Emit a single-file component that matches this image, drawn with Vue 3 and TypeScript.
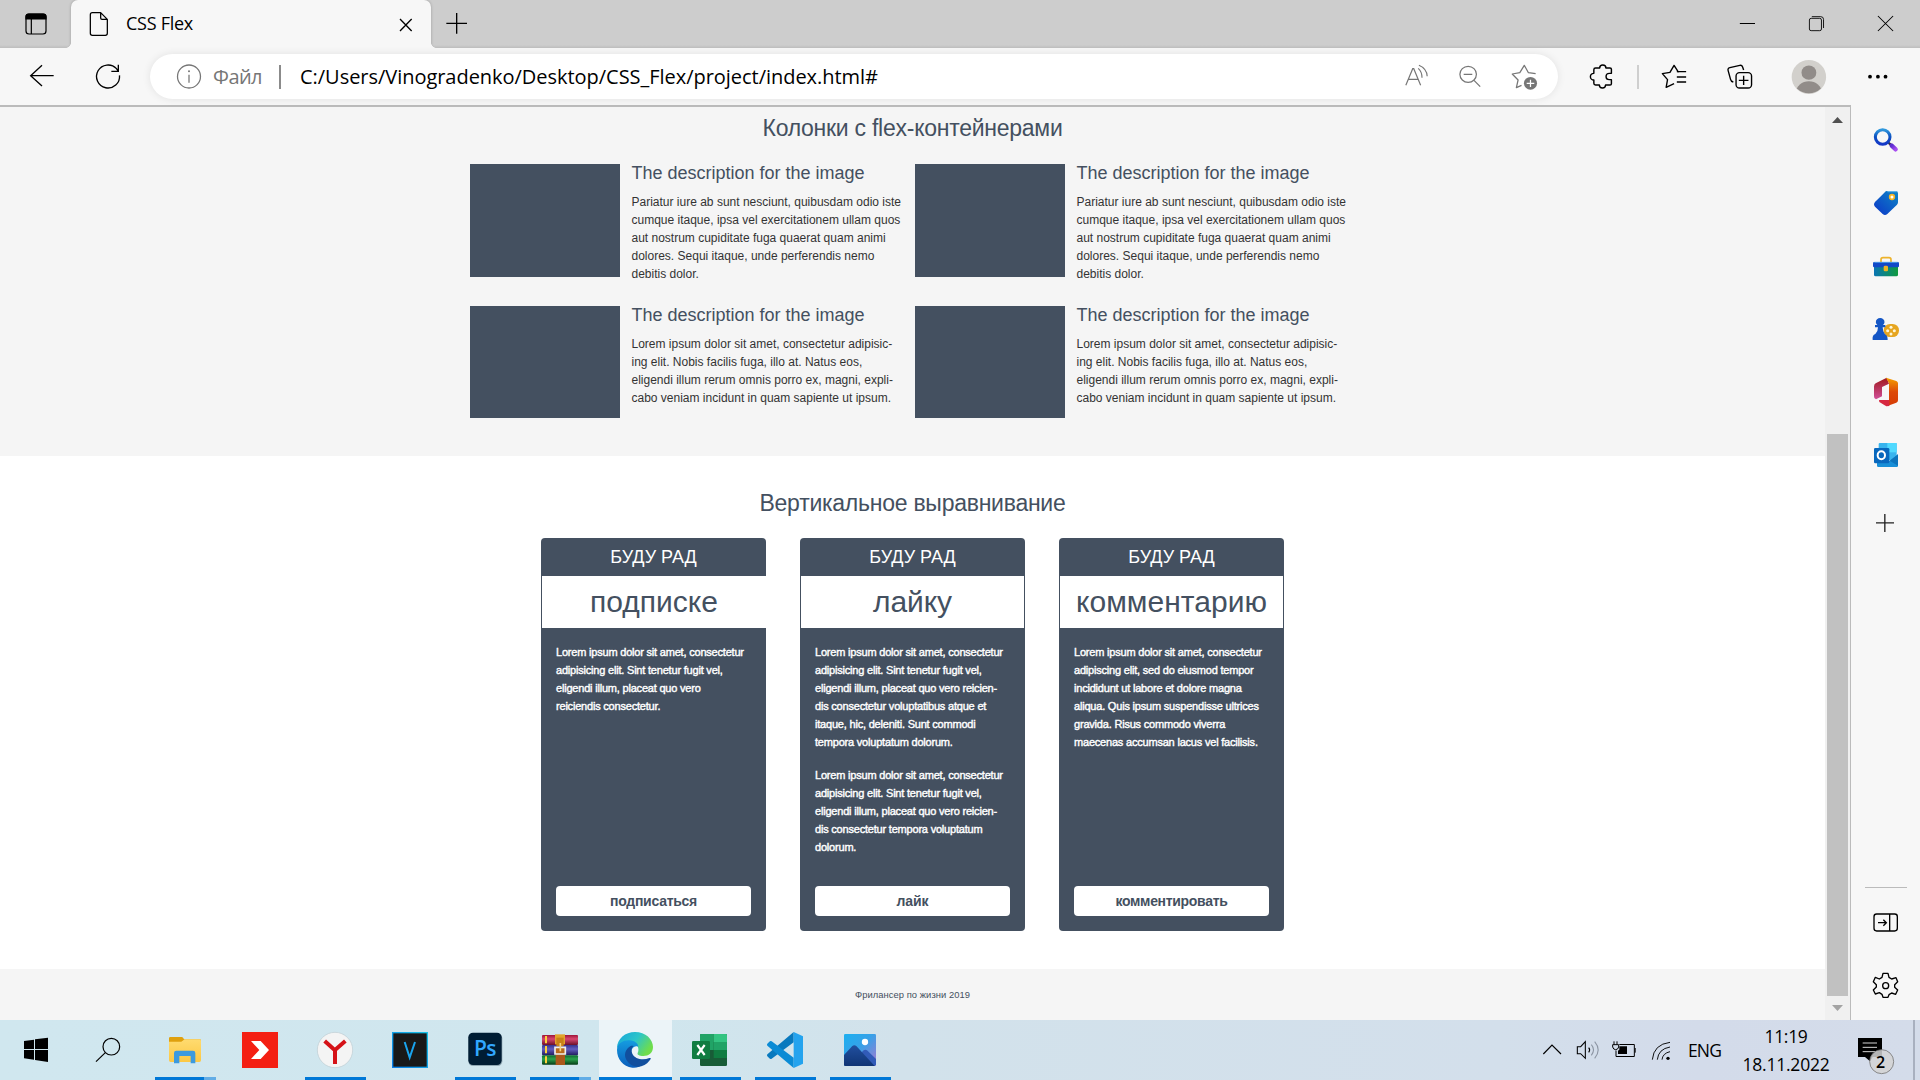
<script setup lang="ts">
interface Article { title: string; lines: string[] }
interface Card { title: string; width: number; kind: string; paragraphs: string[][]; action: string; actionWidth: number }

// Spreads the letters of a label so that it takes the given width.
const vFit = {
  mounted(el: HTMLElement, binding: { value: number }) {
    const count = (el.textContent ?? '').trim().length
    const natural = el.getBoundingClientRect().width
    el.style.letterSpacing = `${(binding.value - natural) / count}px`
  },
}

const pariatur: string[] = [
  'Pariatur iure ab sunt nesciunt, quibusdam odio iste',
  'cumque itaque, ipsa vel exercitationem ullam quos',
  'aut nostrum cupiditate fuga quaerat quam animi',
  'dolores. Sequi itaque, unde perferendis nemo',
  'debitis dolor.',
]
const lorem: string[] = [
  'Lorem ipsum dolor sit amet, consectetur adipisic-',
  'ing elit. Nobis facilis fuga, illo at. Natus eos,',
  'eligendi illum rerum omnis porro ex, magni, expli-',
  'cabo veniam incidunt in quam sapiente ut ipsum.',
]
const articles: Article[] = [pariatur, pariatur, lorem, lorem].map((lines) => ({
  title: 'The description for the image',
  lines,
}))

const cards: Card[] = [
  {
    title: 'подписке', width: 128, kind: 'open', action: 'подписаться', actionWidth: 87,
    paragraphs: [[
      'Lorem ipsum dolor sit amet, consectetur',
      'adipisicing elit. Sint tenetur fugit vel,',
      'eligendi illum, placeat quo vero',
      'reiciendis consectetur.',
    ]],
  },
  {
    title: 'лайку', width: 79, kind: 'closed', action: 'лайк', actionWidth: 32,
    paragraphs: [
      [
        'Lorem ipsum dolor sit amet, consectetur',
        'adipisicing elit. Sint tenetur fugit vel,',
        'eligendi illum, placeat quo vero reicien-',
        'dis consectetur voluptatibus atque et',
        'itaque, hic, deleniti. Sunt commodi',
        'tempora voluptatum dolorum.',
      ],
      [
        'Lorem ipsum dolor sit amet, consectetur',
        'adipisicing elit. Sint tenetur fugit vel,',
        'eligendi illum, placeat quo vero reicien-',
        'dis consectetur tempora voluptatum',
        'dolorum.',
      ],
    ],
  },
  {
    title: 'комментарию', width: 191, kind: 'closed', action: 'комментировать', actionWidth: 112,
    paragraphs: [[
      'Lorem ipsum dolor sit amet, consectetur',
      'adipiscing elit, sed do eiusmod tempor',
      'incididunt ut labore et dolore magna',
      'aliqua. Quis ipsum suspendisse ultrices',
      'gravida. Risus commodo viverra',
      'maecenas accumsan lacus vel facilisis.',
    ]],
  },
]

const SX = 2.904
const bar = (x: number, w: number, top = 144, h = 171): string => `${(x - 1380) * SX} ${top} ${w * SX} ${h}`
</script>

<template>
  <div class="screen">
    <header class="tabs">
      <svg width="71" height="48" viewBox="0 0 213 144" fill="none" stroke="#000" stroke-width="3.6">
        <rect x="78" y="42" width="60" height="60" rx="9" /><path d="M78 57V50q0-8 8-8h44q8 0 8 8v7z" fill="#000" /><path d="M94 57v45" />
      </svg>
      <div class="tab">
        <svg width="55" height="48" viewBox="213 0 165 144" fill="none" stroke="#000" stroke-width="3.8" stroke-linejoin="round">
          <path d="M277 38h25l20 20v42q0 6-6 6h-39q-6 0-6-6V44q0-6 6-6zM302 38v16q0 4 4 4h16" />
        </svg>
        <span class="tab-name"><span v-fit="67">CSS Flex</span></span>
        <svg class="tab-close" width="45" height="48" viewBox="1158 0 135 144" fill="none" stroke="#000" stroke-width="4">
          <path d="M1200 57l35 36M1235 57l-35 36" />
        </svg>
      </div>
      <svg width="50" height="48" viewBox="1293 0 150 144" fill="none" stroke="#000" stroke-width="4"><path d="M1339 70h62M1370 39v62" /></svg>
      <div class="window-buttons">
        <svg width="68" height="48" :viewBox="bar(1713, 68, 0, 144)" preserveAspectRatio="none" fill="none" stroke="#000" stroke-width="3"><path d="M1045 70.5h44" /></svg>
        <svg width="70" height="48" :viewBox="bar(1781, 70, 0, 144)" preserveAspectRatio="none" fill="none" stroke="#000" stroke-width="2.6"><rect x="1247" y="55" width="35" height="37" rx="5" /><path d="M1254 50h26q8 0 8 8v26" /></svg>
        <svg width="69" height="48" :viewBox="bar(1851, 69, 0, 144)" preserveAspectRatio="none" fill="none" stroke="#000" stroke-width="3"><path d="M1446 48l44 45M1490 48l-44 45" /></svg>
      </div>
    </header>

    <div class="toolbar">
      <svg width="72" height="57" viewBox="0 144 216 171" fill="none" stroke="#000" stroke-width="4"><path d="M161 227H92M126 196l-34 31 34 31" /></svg>
      <svg width="78" height="57" viewBox="216 144 234 171" fill="none" stroke="#000" stroke-width="4"><path d="M358.500 226a34.500 34.500 0 1 1-9-20l5 7M355 194v20h-21" /></svg>
      <div class="address">
        <svg width="63" height="45" viewBox="450 162 189 135" fill="none" stroke="#767676" stroke-width="3.8"><circle cx="567" cy="229.500" r="34.500" /><path d="M567 224v24" /><circle cx="567" cy="214" r="3" fill="#767676" stroke="none" /></svg>
        <span class="scheme"><span v-fit="49">Файл</span></span>
        <i class="address-rule"></i>
        <span class="url"><span v-fit="578">C:/Users/Vinogradenko/Desktop/CSS_Flex/project/index.html#</span></span>
        <div class="address-tools">
          <svg width="53" height="45" :viewBox="bar(1389, 53, 162, 135)" preserveAspectRatio="none" fill="none" stroke="#767676" stroke-width="3.4"><path d="M75 256l20-50h3l20 50M82 238h29M111 205q11 10 11 28M113 196q23 10 24 33" /></svg>
          <svg width="53" height="45" :viewBox="bar(1442, 53, 162, 135)" preserveAspectRatio="none" fill="none" stroke="#767676" stroke-width="3.6"><circle cx="256" cy="223" r="24" /><path d="M273 241l18 19M243 223h25" /></svg>
          <svg width="53" height="45" :viewBox="bar(1495, 53, 162, 135)" preserveAspectRatio="none" fill="none" stroke="#767676" stroke-width="3.6" stroke-linejoin="round"><path d="M452 221l-21-3-12-22-13 22-22 4 17 18-5 23 15-7" /><circle cx="437" cy="250" r="19" fill="#767676" stroke="none" /><path d="M426 250h22M437 239v22" stroke="#fff" /></svg>
        </div>
      </div>
      <svg width="79" height="57" :viewBox="bar(1558, 79)" preserveAspectRatio="none" fill="none" stroke="#000" stroke-width="4.200" stroke-linejoin="round"><path d="M626 204h12a9 9 0 0 1 18 0h12q4 0 4 4v12h-6a9 9 0 0 0 0 19h6v12q0 4-4 4h-13a9 9 0 0 1-18 0h-11q-5 0-5-5v-10a9 9 0 0 1 0-20v-11q0-5 5-5z" /></svg>
      <i class="toolbar-rule"></i>
      <svg width="68" height="57" :viewBox="bar(1639, 68)" preserveAspectRatio="none" fill="none" stroke="#000" stroke-width="4" stroke-linejoin="round"><path d="M867 217l-13-21-12 21-22 4 15 18-4 23 23-11M862 215h27M862 231h27M862 246h27" /></svg>
      <svg width="67" height="57" :viewBox="bar(1707, 67)" preserveAspectRatio="none" fill="none" stroke="#000" stroke-width="4" stroke-linejoin="round"><rect x="1034" y="218" width="45" height="46" rx="10" /><path d="M1056 227v28M1042 241h28M1026 246q-7-2-8-8l-7-26q-2-7 5-9l29-7q6-1 8 5l3 9" /></svg>
      <svg width="69" height="57" :viewBox="bar(1774, 69)" preserveAspectRatio="none"><defs><clipPath id="face"><circle cx="1245.500" cy="231" r="49" /></clipPath></defs><ellipse cx="1245.500" cy="231" rx="50" ry="51" fill="#d2d0cc" /><g clip-path="url(#face)" fill="#918c89"><circle cx="1245.500" cy="218" r="21.500" /><ellipse cx="1245.500" cy="276" rx="37" ry="32" /></g></svg>
      <svg width="77" height="57" :viewBox="bar(1843, 77)" preserveAspectRatio="none"><circle cx="1423" cy="230" r="5.500" /><circle cx="1446" cy="230" r="5.500" /><circle cx="1468" cy="230" r="5.500" /></svg>
    </div>

    <div class="body">
      <div class="view">
        <main class="page">
          <section class="columns">
            <h2><span v-fit="300">Колонки с flex-контейнерами</span></h2>
            <div class="grid">
              <article v-for="(a, i) in articles" :key="i">
                <div class="thumb"></div>
                <div class="text">
                  <h3>{{ a.title }}</h3>
                  <p><span v-for="line in a.lines" :key="line" class="line">{{ line }}</span></p>
                </div>
              </article>
            </div>
          </section>
          <section class="vertical">
            <h2><span v-fit="306">Вертикальное выравнивание</span></h2>
            <div class="cards">
              <div v-for="c in cards" :key="c.title" class="card">
                <div class="card-top">БУДУ РАД</div>
                <div class="card-title" :class="c.kind"><span v-fit="c.width">{{ c.title }}</span></div>
                <div class="card-text">
                  <p v-for="(p, n) in c.paragraphs" :key="n"><span v-for="line in p" :key="line" class="line">{{ line }}</span></p>
                </div>
                <a class="action"><span v-fit="c.actionWidth">{{ c.action }}</span></a>
              </div>
            </div>
          </section>
          <footer><span v-fit="115">Фрилансер по жизни 2019</span></footer>
        </main>
        <div class="scroll">
          <svg class="up" width="11" height="6" viewBox="0 0 11 6"><path d="M0 6l5.500-6L11 6z" fill="#505050" /></svg>
          <div class="thumb-bar"></div>
          <svg class="down" width="11" height="6" viewBox="0 0 11 6"><path d="M0 0h11L5.500 6z" fill="#a3a3a3" /></svg>
        </div>
      </div>

      <aside>
        <svg width="69" height="63" viewBox="123 27 207 189">
          <defs>
            <linearGradient id="lens" x1="0" y1="0" x2="0" y2="1"><stop offset="0" stop-color="#2f97dc" /><stop offset=".5" stop-color="#0b4fc0" /><stop offset="1" stop-color="#1437c8" /></linearGradient>
            <linearGradient id="tag" x1="0" y1="1" x2="1" y2="0"><stop offset="0" stop-color="#0c36c8" /><stop offset="1" stop-color="#0e86c6" /></linearGradient>
            <linearGradient id="chest" x1="0" y1="0" x2="1" y2="0"><stop offset="0" stop-color="#0a75b4" /><stop offset="1" stop-color="#109a3e" /></linearGradient>
            <linearGradient id="handle" x1="0" y1="0" x2="1" y2="1"><stop offset="0" stop-color="#5c2bd0" /><stop offset="1" stop-color="#a84ff0" /></linearGradient>
          </defs>
          <path d="M235 128l7 6" stroke="#334" stroke-width="7" /><path d="M245 137l12 11" stroke="url(#handle)" stroke-width="13" stroke-linecap="round" />
          <circle cx="218" cy="111" r="22" fill="none" stroke="url(#lens)" stroke-width="9" />
        </svg>
        <svg width="69" height="63" viewBox="123 216 207 189"><path d="M230 273h27q7 0 7 7v27q0 4-3 7l-29 28q-7 6-14 0l-23-22q-6-7 0-14l28-28q3-4 7-5z" fill="url(#tag)" /><path d="M232 275h28" stroke="#72bdeb" stroke-width="3" /><circle cx="246" cy="291" r="7" fill="#fff" stroke="#f5b526" stroke-width="5" /></svg>
        <svg width="69" height="63" viewBox="123 405 207 189"><path d="M213 487v-8q0-6 6-6h18q6 0 6 6v8" fill="none" stroke="#edb32c" stroke-width="5" /><path d="M192 500h72v24q0 5-5 5h-62q-5 0-5-5z" fill="url(#chest)" /><rect x="189" y="486" width="78" height="16" rx="4" fill="#1249c7" /><path d="M193 487h70" stroke="#4f9de8" stroke-width="3" /><rect x="221" y="497" width="13" height="17" rx="4" fill="#efb224" /></svg>
        <svg width="69" height="63" viewBox="123 592 207 189"><rect x="221" y="670" width="46" height="39" rx="19" fill="#e6a51f" /><g fill="#fff6d8"><circle cx="243" cy="680" r="4.500" /><circle cx="243" cy="700" r="4.500" /><circle cx="233" cy="690" r="4.500" /><circle cx="253" cy="690" r="4.500" /></g><path d="M204 680h-9v-7h7a13 12 0 1 1 17 0h7v7h-8q0 14 7 21 8 3 8 17h-45q-2-15 8-18 8-7 8-20z" fill="#1456c5" /></svg>
        <svg width="69" height="63" viewBox="123 783 207 189"><defs><linearGradient id="offl" x1="0" y1="0" x2="0" y2="1"><stop offset="0" stop-color="#a0191d" /><stop offset="1" stop-color="#d1509a" /></linearGradient><linearGradient id="offr" x1="0" y1="0" x2="0" y2="1"><stop offset="0" stop-color="#f5a000" /><stop offset=".5" stop-color="#dd4a08" /><stop offset="1" stop-color="#d63b05" /></linearGradient></defs><path d="M230 833l7 18-21 10v28l-18 9q-7-3-6-10v-28q0-7 5-10z" fill="url(#offl)" /><path d="M228 833l31 10q5 2 5 7v51q0 5-5 7l-27 10 5-18v-50z" fill="url(#offr)" /><path d="M207 900h31v18l-9 1-21-13z" fill="#d62840" /></svg>
        <svg width="69" height="63" viewBox="123 972 207 189"><rect x="206" y="1029" width="54" height="52" rx="3" fill="#38b4ee" /><path d="M232 1029h28v28h-28z" fill="#50d9ff" /><path d="M201 1063l38 20 25-20v34q0 4-4 4h-55q-4 0-4-4z" fill="#188fd8" /><path d="M239 1082l25 15v-34z" fill="#0c74bd" /><rect x="192" y="1044" width="46" height="46" rx="4" fill="#0867bd" /><ellipse cx="214" cy="1066" rx="11" ry="12" fill="none" stroke="#fff" stroke-width="6" /></svg>
        <svg width="69" height="70" viewBox="123 1161 207 210"><path d="M198 1268.500h54M224.500 1242v54" stroke="#222" stroke-width="4" /></svg>
        <div class="aside-end">
          <i></i>
          <svg width="69" height="63" viewBox="123 84 207 189" fill="none" stroke="#000" stroke-width="4"><rect x="192" y="162" width="70" height="51" rx="8" /><path d="M239 162v51M204 188h25M220 179l9 9-9 9" /></svg>
          <svg width="69" height="69" viewBox="123 273 207 207" fill="none" stroke="#000" stroke-width="4" stroke-linejoin="round"><circle cx="227" cy="377" r="9" /><path d="M219 340h15l3 12 8 5 13-4 5 12-9 9v8l9 8-6 13-12-4-8 5-3 8h-15l-3-9-8-5-12 4-6-12 9-9v-7l-9-9 6-13 12 5 8-5z" /></svg>
        </div>
      </aside>
    </div>

    <div class="taskbar">
      <svg width="72" height="60" viewBox="0 15 216 180"><path d="M72 78l30-4v28H72zM105 73l39-5v34h-39zM72 105h30v29l-30-4zM105 105h39v36l-39-6z" /></svg>
      <svg width="76" height="60" viewBox="216 15 228 180" fill="none" stroke="#000" stroke-width="3.600"><circle cx="334" cy="95" r="25" /><path d="M316 113l-28 27" /></svg>
      <div class="task run more"><svg width="75" height="60" viewBox="444 15 225 180"><defs><linearGradient id="fold" x1="0" y1="0" x2="0" y2="1"><stop offset="0" stop-color="#ffdb70" /><stop offset="1" stop-color="#fcc844" /></linearGradient></defs><path d="M507 70q0-4 4-4h34q4 0 7 7h47q4 0 4 4v20h-96z" fill="#dfa00e" /><path d="M507 80h37l10-7h45q4 0 4 4v59q0 5-5 5h-86q-5 0-5-5z" fill="url(#fold)" /><path d="M522 145v-31q0-7 7-7h50q7 0 7 7v31h-14v-22h-34v22z" fill="#3c9ade" /></svg></div>
      <div class="task"><svg width="75" height="60" viewBox="669 15 225 180"><path d="M726 51h108v108H726z" fill="#f41f13" /><path d="M753 78h29l25 27-25 27h-29l25-27z" fill="#fff" /></svg></div>
      <div class="task run"><svg width="75" height="60" viewBox="894 15 225 180"><circle cx="1005" cy="105" r="53" fill="#f4f4f4" stroke="#bccbd1" stroke-width="2" /><path d="M974 78l30 27M1036 78l-31 27v42" stroke="#d51217" stroke-width="12" stroke-linejoin="round" fill="none" /></svg></div>
      <div class="task"><svg width="75" height="60" viewBox="1119 15 225 180"><defs><linearGradient id="veg" x1="0" y1="1" x2="1" y2="0"><stop offset="0" stop-color="#087de8" /><stop offset="1" stop-color="#18c4e8" /></linearGradient></defs><rect x="1178" y="53" width="104" height="104" fill="#191919" stroke="url(#veg)" stroke-width="4" /><path d="M1214 81l15 47 16-47" fill="none" stroke="#1aa4ee" stroke-width="6" /></svg></div>
      <div class="task run"><svg width="75" height="60" viewBox="24 15 225 180"><rect x="85" y="56" width="102" height="97" rx="14" fill="#68818d" opacity=".6" /><rect x="85" y="53" width="100" height="97" rx="14" fill="#001d34" /></svg><b class="ps">Ps</b></div>
      <div class="task run more"><svg width="75" height="60" viewBox="249 15 225 180">
        <defs><linearGradient id="bk1" x1="0" y1="0" x2="0" y2="1"><stop offset="0" stop-color="#9e1539" /><stop offset=".4" stop-color="#d84870" /><stop offset="1" stop-color="#6d1029" /></linearGradient><linearGradient id="bk2" x1="0" y1="0" x2="0" y2="1"><stop offset="0" stop-color="#35328d" /><stop offset=".4" stop-color="#625dc0" /><stop offset="1" stop-color="#201b5c" /></linearGradient><linearGradient id="bk3" x1="0" y1="0" x2="0" y2="1"><stop offset="0" stop-color="#0e6a31" /><stop offset=".4" stop-color="#2ba24c" /><stop offset="1" stop-color="#063d17" /></linearGradient></defs>
        <rect x="306" y="60" width="108" height="30" rx="3" fill="url(#bk1)" /><rect x="306" y="90" width="108" height="31" rx="3" fill="url(#bk2)" /><rect x="306" y="121" width="108" height="28" rx="3" fill="url(#bk3)" />
        <path d="M318 63v22M318 93v22M318 124v21" stroke="#ffd23b" stroke-width="6" /><path d="M345 58h30v30h-30z" fill="#e2a52b" /><path d="M349 68h22v26h-22z" fill="#c98116" /><path d="M347 117h28v33h-28z" fill="#aa581b" />
        <path d="M345 97h31v20h-31z" fill="#b96a1c" stroke="#eee" stroke-width="5" /><path d="M361 84v25" stroke="#f4d481" stroke-width="5" />
      </svg></div>
      <div class="task run active"><svg width="75" height="60" viewBox="474 15 225 180">
        <defs><linearGradient id="e1" x1="0" y1="0" x2="1" y2=".5"><stop offset="0" stop-color="#16a4dc" /><stop offset=".55" stop-color="#2cc5c9" /><stop offset="1" stop-color="#6fdd4b" /></linearGradient><linearGradient id="e2" x1="0" y1="0" x2="0" y2="1"><stop offset="0" stop-color="#159ce0" /><stop offset="1" stop-color="#0a5dbb" /></linearGradient></defs>
        <path d="M531 100c0-29 25-49 54-49 32 0 54 22 54 45 0 18-13 27-29 27-13 0-19-4-17-9 3-6 3-11 1-17-10-24-46-24-63 3z" fill="url(#e1)" />
        <path d="M531 105c0-20 19-30 37-29 17 1 26 10 27 19-14-5-24 8-20 23 4 19 21 29 40 26-14 13-27 15-38 14-28-3-46-26-46-53z" fill="url(#e2)" />
        <path d="M572 93c-16 9-22 27-12 43 11 17 29 22 44 18 14-4 23-14 28-22 1-3-1-4-4-3-19 8-44 3-51-13-4-9-3-18 4-23-3-1-6-1-9 0z" fill="#114f9e" />
      </svg></div>
      <div class="task run"><svg width="75" height="60" viewBox="699 15 225 180"><rect x="780" y="57" width="81" height="96" rx="4" fill="#185c37" /><path d="M784 57h37v48h-41V61q0-4 4-4z" fill="#21a366" /><path d="M821 57h36q4 0 4 4v20h-40z" fill="#33c481" /><path d="M821 81h40v24h-40z" fill="#21a366" /><path d="M821 105h40v24h-40z" fill="#107c41" /><rect x="756" y="78" width="54" height="54" rx="4" fill="#107c41" /><path d="M772 90l22 30M794 90l-22 30" stroke="#fff" stroke-width="6.500" /></svg></div>
      <div class="task run"><svg width="75" height="60" viewBox="924 15 225 180"><path d="M1061 51v31l-66 49q-4 2-7-1l-6-6q-3-4 1-7z" fill="#0879be" /><path d="M1061 159v-31l-66-49q-4-2-7 1l-6 6q-3 4 1 7z" fill="#0b8bd5" /><path d="M1061 51l28 13v82l-28 13z" fill="#24a3ee" /></svg></div>
      <div class="task run"><svg width="75" height="60" viewBox="1149 15 225 180"><defs><linearGradient id="sky" x1="0" y1="0" x2="1" y2="1"><stop offset="0" stop-color="#1bb0f0" /><stop offset=".45" stop-color="#37a1e8" /><stop offset="1" stop-color="#a878cf" /></linearGradient><linearGradient id="hill" x1="0" y1="0" x2="0" y2="1"><stop offset="0" stop-color="#214f9f" /><stop offset="1" stop-color="#103575" /></linearGradient></defs><rect x="1212" y="57" width="96" height="96" rx="4" fill="url(#sky)" /><circle cx="1275" cy="81" r="9.500" fill="#fff" /><path d="M1257 120l14-14q5-4 10 0l27 26v17l-4 4h-25z" fill="#315bb8" /><path d="M1212 120l25-27q6-5 12 0l55 60h-88q-4 0-4-4z" fill="url(#hill)" /></svg></div>

      <div class="tray">
        <svg width="36" height="60" viewBox="108 15 108 180" fill="none" stroke="#000" stroke-width="3.500"><path d="M130 117l26-27 27 27" /></svg>
        <svg width="34" height="60" viewBox="216 15 102 180" fill="none" stroke="#000" stroke-width="3.200"><path d="M232 95h10l14-15v50l-14-14h-10z" /><path d="M266 98q6 7 0 14" /><path d="M274 89q13 15 0 32M284 80q21 25 0 50" stroke="#8c95a3" /></svg>
        <svg width="38" height="60" viewBox="318 15 114 180" fill="none" stroke="#000" stroke-width="3"><path d="M358 88.500h45v36h-55v-18M405.500 99v14" /><path d="M358 94h23v23h-27v-10l4-3z" fill="#000" stroke="none" /><path d="M342 79v10M351 79v10M338 89h18v7q-2 8-9 8t-9-8z" /></svg>
        <svg width="36" height="60" viewBox="432 15 108 180" fill="none" stroke="#000" stroke-width="2.800"><path d="M457 134q4-46 53-52M472 134q3-32 38-38M486 134q2-19 24-24" /><circle cx="504" cy="130" r="5" fill="#000" stroke="none" /></svg>
        <span class="lang"><span v-fit="33">ENG</span></span>
        <div class="clock"><div><span v-fit="43">11:19</span></div><div><span v-fit="87">18.11.2022</span></div></div>
        <div class="notes">
          <svg width="63" height="60" viewBox="1050 15 189 180"><path d="M1074 69h72v57h-28l-8 13-15-13h-21z" /><path d="M1088 84h43M1088 97h43M1088 110h43" stroke="#fff" stroke-width="2.500" /><circle cx="1145" cy="140" r="36" fill="#d3d3d3" fill-opacity=".85" stroke="#777" stroke-width="2.500" /></svg>
          <span class="count">2</span>
        </div>
        <i class="peek"></i>
      </div>
    </div>
  </div>
</template>

<style>
body { margin: 0; overflow: hidden; }
</style>

<style scoped>
.screen { width: 1920px; height: 1080px; display: flex; flex-direction: column; background: #f7f7f7; font-family: "Noto Sans", "Open Sans", sans-serif; color: #000; overflow: hidden; }
svg { display: block; flex: none; }
h2, h3, p { margin: 0; font-weight: 400; }
span { white-space: nowrap; }

.tabs { height: 48px; flex: none; display: flex; background: linear-gradient(#cdcdcd 45px, #bdbdbd 48px); }
.tab { position: relative; width: 360px; height: 48px; display: flex; background: #f7f7f7; border-radius: 7px 7px 0 0; box-shadow: 0 0 3px rgba(0, 0, 0, .25); }
.tab::before, .tab::after { content: ""; position: absolute; bottom: 0; width: 5px; height: 5px; }
.tab::before { left: -5px; background: radial-gradient(circle at 0 0, transparent 4.5px, #f7f7f7 5px); }
.tab::after { right: -5px; background: radial-gradient(circle at 100% 0, transparent 4.5px, #f7f7f7 5px); }
.tab-name { font-family: "Open Sans", sans-serif; font-size: 18px; line-height: 46px; }
.tab-close { margin-left: auto; }
.window-buttons { display: flex; margin-left: auto; }

.toolbar { height: 57px; flex: none; display: flex; align-items: center; background: #f7f7f7; position: relative; }
.address { width: 1408px; height: 45px; display: flex; align-items: center; background: #fff; border-radius: 23px; box-shadow: 0 0 8px rgba(0, 0, 0, .09); }
.scheme { width: 66px; color: #767676; font: 20px/45px "Open Sans", sans-serif; }
.address-rule { width: 2px; height: 24px; background: #8b8b8b; margin-right: 19px; }
.url { font: 20px/45px "Open Sans", sans-serif; }
.address-tools { display: flex; margin: 0 10px 0 auto; }
.toolbar-rule { width: 2px; height: 24px; background: #cfcfcf; }

.body { height: 915px; flex: none; display: flex; }
.view { width: 1851px; height: 915px; box-sizing: border-box; display: flex; border-top: 2px solid #bbb; border-right: 1px solid #bbb; }
.page { width: 1825px; background: #fff; font-family: "Liberation Sans", Arial, sans-serif; }
.page h2 { font-size: 23px; line-height: 30px; text-align: center; color: #445060; }
.columns { height: 349px; box-sizing: border-box; padding-top: 6px; background: #f5f5f5; }
.grid { display: grid; grid-template-columns: 445px 445px; grid-auto-rows: 142px; margin: 21px 0 0 470px; }
article { display: flex; align-items: flex-start; }
.thumb { width: 150px; height: 113px; background: #445060; flex: none; }
article:nth-child(n + 3) .thumb { height: 112px; }
.text { padding-left: 11.5px; }
.text h3 { font-size: 18px; line-height: 18px; color: #445060; margin-bottom: 11px; }
.text p { font-size: 12px; line-height: 18px; color: #333; }
.line { display: block; }
.vertical { height: 513px; box-sizing: border-box; padding-top: 32px; }
.cards { display: flex; justify-content: center; gap: 34px; margin-top: 20px; }
.card { width: 225px; height: 393px; display: flex; flex-direction: column; background: #445060; border-radius: 4px; color: #fff; }
.card-top { font-size: 18px; line-height: 38px; text-align: center; }
.card-title { margin: 0 1px; font-size: 30px; line-height: 52px; height: 52px; text-align: center; color: #445060; background: #fff; }
.card-title.open { margin-right: 0; }
.card-text { padding: 15px 15px 0; display: flex; flex-direction: column; gap: 15px; font-size: 11px; line-height: 18px; letter-spacing: -.2px; -webkit-text-stroke: .4px #fff; }
.action { margin: auto 15px 15px; height: 30px; background: #fff; border-radius: 4px; color: #445060; font-size: 14px; font-weight: 700; line-height: 30px; text-align: center; }
footer { height: 51px; background: #f5f5f5; text-align: center; font-size: 9.4px; line-height: 52px; color: #445060; }

.scroll { width: 25px; display: flex; flex-direction: column; background: #f0f0f0; }
.up { margin: 10px 0 0 7px; }
.thumb-bar { width: 21px; height: 562px; margin: 311px 0 9px 2px; background: #c1c1c1; }
.down { margin-left: 7px; }

aside { width: 69px; box-sizing: border-box; padding-top: 4px; display: flex; flex-direction: column; background: #f7f7f7; }
.aside-end { margin-top: auto; }
.aside-end i { display: block; height: 1px; margin: 0 13px 0 14px; background: #bbb; }

.taskbar { height: 60px; flex: none; display: flex; background: linear-gradient(90deg, #d0e7ef 0, #d0e6ee 650px, #d2e2eb 900px, #d3dfeb 1500px, #d3dbea 1700px, #d4dcea 1920px); }
.task { position: relative; width: 75px; height: 60px; }
.task.run::after { content: ""; position: absolute; left: 7px; bottom: 0; width: 61px; height: 3px; background: #0078d7; }
.task.more::after { background: linear-gradient(90deg, #0078d7 49px, #62ade6 49px); }
.task.active::before { content: ""; position: absolute; left: 1px; top: 0; width: 73px; height: 60px; background: #ecf4f8; }
.task.active::after { left: 1px; width: 73px; }
.task svg { position: relative; }
.ps { position: absolute; left: 26px; top: 12px; font: 600 21px/32px "Open Sans", sans-serif; color: #31a8ff; letter-spacing: -.6px; }
.tray { margin-left: auto; display: flex; font-family: "Open Sans", sans-serif; font-size: 17.5px; }
.lang { width: 55px; padding-left: 8px; line-height: 60px; }
.clock { width: 86px; display: flex; flex-direction: column; align-items: center; line-height: 28px; padding-top: 2px; margin-right: 21px; }
.notes { position: relative; }
.count { position: absolute; left: 26px; top: 29px; font-weight: 600; font-size: 16px; line-height: 26px; }
.peek { width: 2px; margin-right: 5px; background: #a8b0bf; }
</style>
